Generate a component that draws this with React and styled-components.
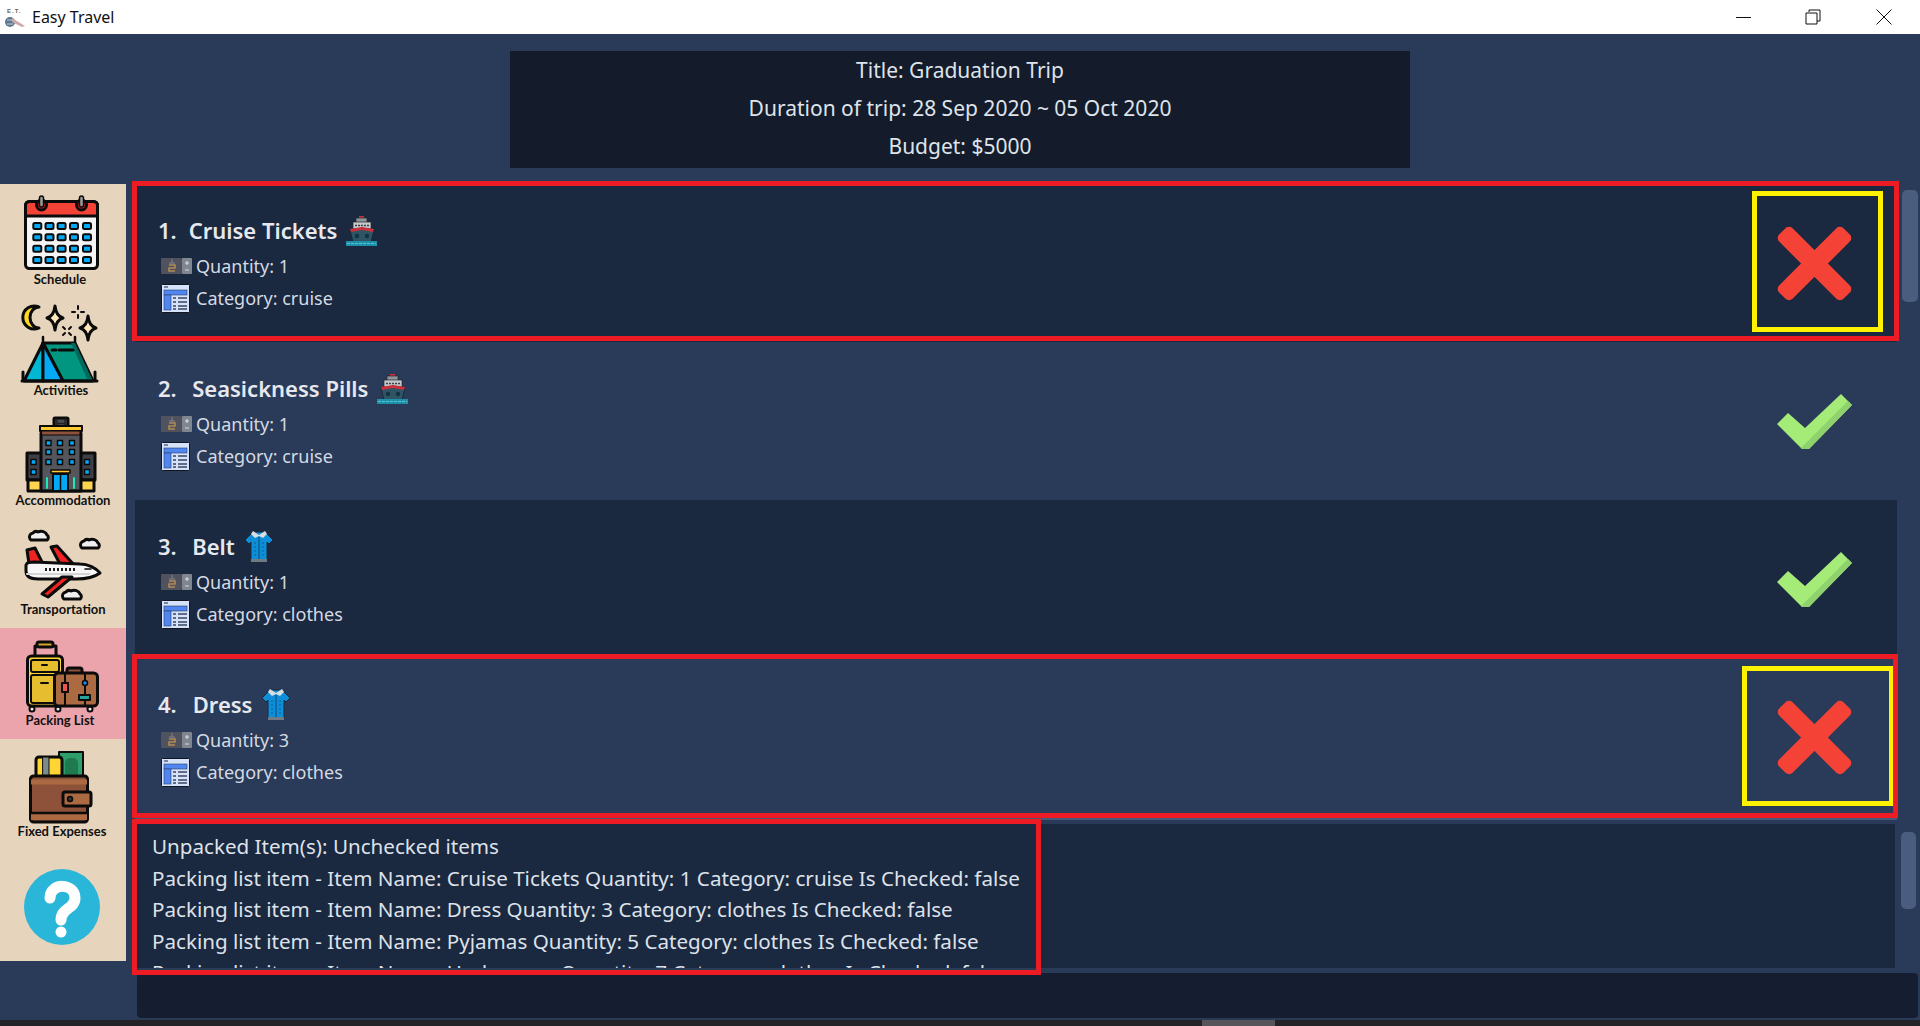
import React from "react";
import styled, { createGlobalStyle } from "styled-components";

const COLORS = {
  page: "#2a3a59",
  dark: "#1a2840",
  darker: "#141b2b",
  command: "#141e30",
  text: "#dfe3ea",
  sand: "#e6d5bc",
  pink: "#eba3ac",
  red: "#ed1c24",
  yellow: "#fff200",
  thumb: "#4a5d7e",
};

const UI_FONT = `"Noto Sans", "Open Sans", sans-serif`;

const GlobalStyle = createGlobalStyle`
  html, body {
    margin: 0;
    padding: 0;
    height: 100%;
    background: ${COLORS.page};
    overflow: hidden;
  }
  * {
    box-sizing: border-box;
  }
`;

const ITEMS = [
  { id: 1, name: "Cruise Tickets", qty: 1, cat: "cruise", ok: false, gap: 3, frame: "-3px -2px 1px -3px", tick: "-35px -31px -31px -25px" },
  { id: 2, name: "Seasickness Pills", qty: 1, cat: "cruise", ok: true, gap: 6.5 },
  { id: 3, name: "Belt", qty: 1, cat: "clothes", ok: true, gap: 6.5 },
  { id: 4, name: "Dress", qty: 3, cat: "clothes", ok: false, gap: 7, frame: "-4px -1px -2px -3px", tick: "-34px -42px -31px -35px" },
];

const LOG = [
  "Unpacked Item(s): Unchecked items",
  "Packing list item - Item Name: Cruise Tickets Quantity: 1 Category: cruise Is Checked: false",
  "Packing list item - Item Name: Dress Quantity: 3 Category: clothes Is Checked: false",
  "Packing list item - Item Name: Pyjamas Quantity: 5 Category: clothes Is Checked: false",
  "Packing list item - Item Name: Underwear Quantity: 7 Category: clothes Is Checked: false",
];

/* ---------- small icons ---------- */

const Logo = () => (
  <svg width="24" height="24" viewBox="0 0 24 24">
    <text x="5" y="8" fontSize="6" fontWeight="700" letterSpacing="1" fill="#666" fontFamily="Liberation Sans, sans-serif">E.T.</text>
    <circle cx="8" cy="17" r="5" fill="#5d7690" />
    <path d="M5 15h6M5 19h6" stroke="#c4ced6" strokeWidth="1" />
    <path d="M10 13l13 8-3 1-10-5z" fill="#c9a9a9" />
  </svg>
);

const ShipIcon = () => (
  <svg width="31" height="31" viewBox="0 0 31 31">
    <rect x="13" y="1" width="5" height="3" fill="#c8303c" />
    <rect x="10" y="3" width="11" height="5" fill="#8f979c" stroke="#20262c" strokeWidth="0.7" />
    <rect x="7" y="7" width="18" height="7" fill="#c5c9c9" stroke="#20262c" strokeWidth="0.7" />
    <path d="M9 10.500h14" stroke="#3c4248" strokeWidth="1.500" strokeDasharray="2 1" />
    <path d="M4 15l12-2 12 2-3 12H7z" fill="#2e5566" stroke="#14242c" strokeWidth="0.8" />
    <path d="M4 14l12-2 12 2-1 3-11-2-11 2z" fill="#c8303c" />
    <circle cx="11" cy="21" r="2.200" fill="#14323f" />
    <circle cx="21" cy="21" r="2.200" fill="#14323f" />
    <rect x="0" y="26" width="31" height="5" fill="#1f8fa8" />
    <path d="M1 28.500h29" stroke="#54c4d8" strokeWidth="1" strokeDasharray="3 1" />
  </svg>
);

const ShirtIcon = () => (
  <svg width="30" height="32" viewBox="0 0 30 32">
    <path d="M9 2L1 10l4 4 2-2v19h16V12l2 2 4-4-8-8z" fill="#0c8fd8" stroke="#1a2a3a" strokeWidth="1" />
    <path d="M9 1l6 4 6-4 2 3-4 4-4-2-4 2-4-4z" fill="#d8dde2" />
    <path d="M15 7v23" stroke="#0a5f96" strokeWidth="1.500" />
    <path d="M11 12v14M19 12v14" stroke="#0a5f96" strokeWidth="1" strokeDasharray="2 2" />
    <rect x="7" y="29" width="16" height="3" fill="#6f7a84" />
  </svg>
);

const QuantityIcon = () => (
  <svg width="31" height="16" viewBox="0 0 31 16">
    <rect x="0" y="0" width="21" height="16" rx="1" fill="#50535d" />
    <rect x="21" y="0" width="10" height="16" rx="1" fill="#7f8690" />
    <path d="M11 1v4M8 5h6" stroke="#82858d" strokeWidth="1" />
    <path d="M8 7h6v3H8v3h6" fill="none" stroke="#b08a55" strokeWidth="1.600" />
    <path d="M24 5h4M26 3v4M24 12h4" stroke="#d6dae0" strokeWidth="1.200" />
  </svg>
);

const CategoryIcon = () => (
  <svg width="29" height="29" viewBox="0 0 29 29">
    <rect x="0.500" y="0.500" width="28" height="28" rx="1" fill="#d5e2fa" stroke="#10151f" />
    <rect x="3" y="6" width="23" height="5" fill="#4f86f0" stroke="#2a3f66" strokeWidth="0.600" />
    <rect x="3" y="11" width="7" height="15" fill="#4f86f0" stroke="#2a3f66" strokeWidth="0.600" />
    <path d="M12 14h3M17 14h9M12 18h3M17 18h9M12 22h3M17 22h9M12 25h3M17 25h9" stroke="#3a4660" strokeWidth="1.600" />
    <path d="M3 3h4" stroke="#3a4660" strokeWidth="1.200" />
  </svg>
);

const CrossIcon = () => (
  <svg width="75" height="75" viewBox="0 0 75 75" style={{ display: "block", overflow: "visible" }}>
    <g fill="#f44336" transform="rotate(45 37.500 37.500)">
      <rect x="-8" y="28" width="91" height="19" rx="5" />
      <rect x="28" y="-8" width="19" height="91" rx="5" />
    </g>
  </svg>
);

const TickIcon = () => (
  <svg width="75" height="55" viewBox="0 0 75 55" style={{ display: "block" }}>
    <path d="M0 30L11 19 28 34 64 0 75 11 32 55H25z" fill="#a5eb78" />
    <path d="M75 11L32 55H25l-1-1 47-47z" fill="#8fd16c" />
  </svg>
);

/* ---------- sidebar drawings, 126 wide, y measured from the item top ---------- */

const StrokeGroup = ({ children, width = 3 }) => (
  <g stroke="#0b0b0b" strokeWidth={width} strokeLinejoin="round" strokeLinecap="round">
    {children}
  </g>
);

const CalendarArt = () => {
  const xs = [37.3, 49.5, 61.6, 74, 87];
  const ys = [42, 53.3, 64.7, 76];
  return (
    <StrokeGroup>
      <rect x="25.500" y="17.500" width="72" height="67" rx="4" fill="#f5f5f5" />
      <path d="M25.500 32V21.500a4 4 0 0 1 4-4h64a4 4 0 0 1 4 4V32z" fill="#f44336" />
      <circle cx="41.500" cy="21" r="5" fill="#b71c1c" />
      <circle cx="81.500" cy="21" r="5" fill="#b71c1c" />
      <rect x="39.500" y="12" width="4" height="11" rx="2" fill="#9e9e9e" strokeWidth="1.500" />
      <rect x="79.500" y="12" width="4" height="11" rx="2" fill="#9e9e9e" strokeWidth="1.500" />
      {ys.map((y) =>
        xs.map((x) => (
          <rect key={`${x}-${y}`} x={x - 4} y={y - 3} width="8" height="6" rx="1.500" fill="#03a9f4" strokeWidth="2" />
        ))
      )}
    </StrokeGroup>
  );
};

const Sparkle = ({ x, y, w, h }) => (
  <path
    d={`M${x} ${y - h}Q${x + 1} ${y - 2} ${x + w} ${y}Q${x + 1} ${y + 2} ${x} ${y + h}Q${x - 1} ${y + 2} ${x - w} ${y}Q${x - 1} ${y - 2} ${x} ${y - h}z`}
    fill="#ffe9b8"
  />
);

const TentArt = () => (
  <StrokeGroup>
    <path d="M39 12a11.500 11.500 0 1 0 0 21a9 10.500 0 0 1 0-21z" fill="#ffd81f" />
    <Sparkle x={55} y={23} w={8} h={12} />
    <Sparkle x={88} y={33} w={8} h={12} />
    <path d="M78 11v3M78 20v3M72 17h3M81 17h3M63 32l2 2M71 32l-2 2M63 40l2-2M71 40l-2-2" strokeWidth="2" />
    <path d="M43 48l32 0 18 38H63z" fill="#00967f" />
    <path d="M75 48l18 38h-5l-17-38z" fill="#00695c" stroke="none" />
    <path d="M43 48L24 86h19z" fill="#00b8d4" />
    <path d="M43 48l20 38H43z" fill="#03a9f4" />
    <path d="M52 55h4M59 55h14M23 77v9M95 77v9M22 86h75" />
    <path d="M43 42v6M75 42v5" strokeWidth="2.500" />
  </StrokeGroup>
);

const HotelArt = () => {
  const windows = [48.5, 60, 72];
  return (
    <StrokeGroup>
      <rect x="54" y="12" width="14" height="12" rx="1" fill="#4d4d54" />
      <path d="M57 14v7M65 14v7M57 17.500h8" strokeWidth="1.500" stroke="#222" />
      <rect x="27" y="47" width="68" height="27" fill="#3f3f46" />
      <rect x="28" y="74" width="66" height="11" fill="#ffd54f" />
      <rect x="41" y="27" width="40" height="58" fill="#55555c" />
      <rect x="40" y="20" width="42" height="5" fill="#ffc933" strokeWidth="2" />
      <rect x="42" y="25" width="38" height="4" fill="#8d5239" strokeWidth="1" />
      {[37, 46, 56].map((y) =>
        windows.map((x) => (
          <rect key={`${x}-${y}`} x={x - 2.5} y={y - 2.5} width="5" height="5" fill="#03a9f4" strokeWidth="1.500" />
        ))
      )}
      {[56, 66].flatMap((y) =>
        [33.5, 87].map((x) => (
          <rect key={`${x}-${y}`} x={x - 2.5} y={y - 2.5} width="5" height="5" fill="#03a9f4" strokeWidth="1.500" />
        ))
      )}
      <rect x="51" y="64" width="19" height="3" fill="#ffc933" strokeWidth="1.500" />
      <rect x="53" y="68" width="15" height="17" fill="#03a9f4" strokeWidth="2" />
      <path d="M60.500 68v17" strokeWidth="1.500" />
      <path d="M47 72v10M74 72v10" stroke="#1de9b6" strokeWidth="2" />
    </StrokeGroup>
  );
};

const Cloud = ({ x, y }) => (
  <path
    d={`M${x + 3} ${y + 10}a4 4 0 0 1 3-6a4 4 0 0 1 5-1a6 5 0 0 1 9 3a3 3 0 0 1 0 5h-16a3 3 0 0 1-1-1z`}
    fill="#efefef"
  />
);

const PlaneArt = () => (
  <StrokeGroup>
    <Cloud x={27} y={12} />
    <Cloud x={78} y={20} />
    <Cloud x={60} y={71} />
    <path d="M27 33l8-2 8 16H29z" fill="#ef2222" />
    <path d="M51 30l6-1 18 20H61z" fill="#ef2222" />
    <path d="M26 48c1-3 4-3 8-3l46 2c8 0 16 4 20 9-4 3-12 6-24 6H38c-8 0-12-3-12-8z" fill="#f7f7f7" />
    <path d="M27 57h62" stroke="#d5d5d5" strokeWidth="2" />
    <path d="M62 60l10 0-24 20-6-3z" fill="#ef2222" />
    <path d="M46 51v3M50 51v3M54 51v3M58 51v3M62 51v3M66 51v3M70 51v3M74 51v3" strokeWidth="1.800" strokeLinecap="butt" />
    <path d="M85 52h6" strokeWidth="1.500" />
  </StrokeGroup>
);

const LuggageArt = () => (
  <StrokeGroup>
    <path d="M35 28V18h21v10" fill="none" />
    <rect x="37" y="14" width="16" height="5" rx="2" fill="#d4a72c" />
    <circle cx="32" cy="81" r="2.500" fill="#eee" strokeWidth="2" />
    <circle cx="58" cy="81" r="2.500" fill="#eee" strokeWidth="2" />
    <circle cx="90" cy="81" r="2.500" fill="#eee" strokeWidth="2" />
    <rect x="27.500" y="28" width="35" height="50" rx="4" fill="#ffd533" />
    <rect x="31" y="32" width="28" height="12" rx="2" fill="#e5bd2e" strokeWidth="2" />
    <rect x="31" y="47" width="28" height="28" rx="2" fill="#e5bd2e" strokeWidth="2" />
    <path d="M41 55h7M42 37h5" strokeWidth="2" />
    <rect x="67" y="40" width="15" height="6" rx="2" fill="#8d5239" />
    <rect x="54.500" y="45" width="43" height="33" rx="4" fill="#ac6a42" />
    <path d="M65 45v33M85 45v33" strokeWidth="2" />
    <rect x="62" y="55" width="6" height="9" fill="#ef5350" strokeWidth="2" />
    <circle cx="85" cy="55" r="2.500" fill="#1e88e5" strokeWidth="1.500" />
    <rect x="79" y="67" width="11" height="5" fill="#26a69a" strokeWidth="2" />
  </StrokeGroup>
);

const WalletArt = () => (
  <StrokeGroup>
    <rect x="59" y="13" width="24" height="28" fill="#2e9e6b" strokeWidth="2" />
    <rect x="65" y="19" width="13" height="20" rx="5" fill="#1f7a50" stroke="none" />
    <path d="M36 38V21a3 3 0 0 1 3-3h20a3 3 0 0 1 3 3v17z" fill="#ffd533" />
    <rect x="43" y="18" width="6" height="20" fill="#7b8a8a" strokeWidth="1" />
    <rect x="30.500" y="37" width="57" height="46" rx="3" fill="#8d5239" />
    <path d="M31 43h56" stroke="#ac6a42" strokeWidth="5" strokeLinecap="butt" />
    <path d="M31 78h56" stroke="#ac6a42" strokeWidth="6" strokeLinecap="butt" />
    <path d="M31 74h56" strokeWidth="2.500" />
    <rect x="63" y="53" width="28" height="14" rx="2" fill="#ac6a42" />
    <circle cx="70" cy="60" r="2.500" fill="#333" strokeWidth="1.500" />
  </StrokeGroup>
);

const HelpArt = () => (
  <>
    <circle cx="62" cy="57" r="38" fill="#29b6d8" />
    <path d="M50 48C50 32 75 33 75 48C75 59 61 58 61 70" fill="none" stroke="#fff" strokeWidth="11" strokeLinecap="round" />
    <circle cx="61" cy="82" r="5.500" fill="#fff" />
  </>
);

const NAV = [
  { label: "Schedule", Art: CalendarArt, shift: -3, drop: 3 },
  { label: "Activities", Art: TentArt, shift: -2, drop: 3 },
  { label: "Accommodation", Art: HotelArt, shift: 0, drop: 2 },
  { label: "Transportation", Art: PlaneArt, shift: 0, drop: 0 },
  { label: "Packing List", Art: LuggageArt, shift: -3, drop: 0, active: true },
  { label: "Fixed Expenses", Art: WalletArt, shift: -1, drop: 0 },
  { Art: HelpArt },
];

const App = () => {
  return (
    <>
      <GlobalStyle />
      <Window>
        <TitleBar>
          <AppName>
            <Logo />
            Easy Travel
          </AppName>
          <WindowButtons>
            <WindowButton aria-label="Minimize">
              <svg width="16" height="16" viewBox="0 0 16 16">
                <path d="M0 8.500h15" stroke="#111" strokeWidth="1" />
              </svg>
            </WindowButton>
            <WindowButton aria-label="Restore">
              <svg width="16" height="16" viewBox="0 0 16 16">
                <path d="M4 3V1h11v11h-3M1 4h11v11H1z" fill="none" stroke="#111" strokeWidth="1" />
              </svg>
            </WindowButton>
            <CloseButton aria-label="Close">
              <svg width="16" height="16" viewBox="0 0 16 16">
                <path d="M0.500 0.500l15 15M15.500 0.500l-15 15" stroke="#111" strokeWidth="1" />
              </svg>
            </CloseButton>
          </WindowButtons>
        </TitleBar>

        <HeaderZone>
          <TripCard>
            <TripLine>Title: Graduation Trip</TripLine>
            <TripLine>Duration of trip: 28 Sep 2020 ~ 05 Oct 2020</TripLine>
            <TripLine>Budget: $5000</TripLine>
          </TripCard>
        </HeaderZone>

        <Main>
          <SideBar>
            {NAV.map(({ label, Art, shift, drop, active }, i) => (
              <NavItem key={i} $active={active}>
                <NavArt viewBox="0 0 126 84">
                  <Art />
                </NavArt>
                {label && (
                  <NavLabel $shift={shift} $drop={drop}>
                    {label}
                  </NavLabel>
                )}
              </NavItem>
            ))}
          </SideBar>

          <Content>
            <ListPane>
              <Rows>
                {ITEMS.map((item, i) => (
                  <Row key={item.id} $dark={i % 2 === 0}>
                    <RowInfo>
                      <RowTitle>
                        <RowNumber $gap={item.gap}>{item.id}.</RowNumber>
                        <span>{item.name}</span>
                        {item.cat === "cruise" ? <ShipIcon /> : <ShirtIcon />}
                      </RowTitle>
                      <Meta>
                        <MetaIcon>
                          <QuantityIcon />
                        </MetaIcon>
                        Quantity: {item.qty}
                      </Meta>
                      <Meta>
                        <MetaIcon>
                          <CategoryIcon />
                        </MetaIcon>
                        Category: {item.cat}
                      </Meta>
                    </RowInfo>
                    <Status>
                      {item.ok ? <TickIcon /> : <CrossIcon />}
                      {item.tick && <TickFrame $inset={item.tick} />}
                    </Status>
                    {item.frame && <RowFrame $inset={item.frame} />}
                  </Row>
                ))}
                <RowsEdge />
              </Rows>
              <ListTrack>
                <Thumb $height={112} />
              </ListTrack>
            </ListPane>

            <ConsoleZone>
              <Console>
                {LOG.map((line) => (
                  <ConsoleLine key={line}>{line}</ConsoleLine>
                ))}
              </Console>
              <ConsoleTrack>
                <Thumb $height={77} />
              </ConsoleTrack>
              <ConsoleFrame />
            </ConsoleZone>

            <CommandBox />
          </Content>
        </Main>

        <BottomBar>
          <BottomThumb />
        </BottomBar>
      </Window>
    </>
  );
};

const Window = styled.div`
  width: 1920px;
  height: 1026px;
  display: flex;
  flex-direction: column;
  background: ${COLORS.page};
  font-family: ${UI_FONT};
  color: ${COLORS.text};
  overflow: hidden;
`;

const TitleBar = styled.header`
  height: 34px;
  flex: none;
  background: #fff;
  display: flex;
  align-items: center;
  justify-content: space-between;
  color: #111;
`;

const AppName = styled.div`
  display: flex;
  align-items: center;
  gap: 6px;
  padding-left: 2px;
  font-size: 16px;
`;

const WindowButtons = styled.div`
  display: flex;
  padding-right: 2px;
`;

const WindowButton = styled.div`
  width: 69px;
  height: 34px;
  display: flex;
  align-items: center;
  justify-content: center;
`;

const CloseButton = styled(WindowButton)`
  margin-left: 2px;
`;

const HeaderZone = styled.div`
  flex: none;
  display: flex;
  justify-content: center;
  padding: 17px 0 16px;
`;

const TripCard = styled.div`
  width: 900px;
  height: 117px;
  background: ${COLORS.darker};
  display: flex;
  flex-direction: column;
  align-items: center;
`;

const TripLine = styled.div`
  height: 38px;
  line-height: 38px;
  font-size: 21px;
`;

const Main = styled.main`
  flex: 1;
  min-height: 0;
  display: flex;
  align-items: flex-start;
`;

const SideBar = styled.nav`
  width: 126px;
  flex: none;
  background: ${COLORS.sand};
`;

const NavItem = styled.div`
  height: 111px;
  background: ${(p) => (p.$active ? COLORS.pink : "transparent")};
`;

const NavArt = styled.svg`
  display: block;
  width: 126px;
  height: 84px;
  overflow: visible;
`;

const NavLabel = styled.div`
  height: 16px;
  line-height: 16px;
  text-align: center;
  font-family: "Lato", sans-serif;
  font-size: 13px;
  font-weight: 700;
  color: #111;
  margin-top: ${(p) => p.$drop}px;
  transform: translateX(${(p) => p.$shift}px);
`;

const Content = styled.div`
  flex: 1;
  min-width: 0;
  padding-left: 9px;
`;

const ListPane = styled.section`
  height: 640px;
  display: flex;
`;

const Rows = styled.div`
  width: 1762px;
  flex: none;
`;

const Row = styled.article`
  position: relative;
  height: 158px;
  display: flex;
  align-items: center;
  justify-content: space-between;
  padding-right: 45px;
  background: ${(p) => (p.$dark ? COLORS.dark : COLORS.page)};
`;

const RowsEdge = styled.div`
  height: 4px;
  background: #45587a;
`;

const RowFrame = styled.div`
  position: absolute;
  inset: ${(p) => p.$inset};
  border: 5px solid ${COLORS.red};
  pointer-events: none;
`;

const RowInfo = styled.div`
  align-self: flex-start;
  padding: 30px 0 0 23px;
`;

const RowTitle = styled.div`
  height: 32px;
  margin-bottom: 4px;
  display: flex;
  align-items: center;
  gap: 9px;
  font-size: 22px;
  font-weight: 600;
  color: #e6e8ee;
`;

const RowNumber = styled.span`
  margin-right: ${(p) => p.$gap}px;
`;

const Meta = styled.div`
  height: 32px;
  display: flex;
  align-items: center;
  margin-left: -1px;
  font-size: 18px;
  color: #d5dae3;
`;

const MetaIcon = styled.span`
  width: 39px;
  padding-left: 4px;
  display: flex;
  align-items: center;
`;

const Status = styled.div`
  position: relative;
  width: 75px;
`;

const TickFrame = styled.div`
  position: absolute;
  inset: ${(p) => p.$inset};
  border: 5px solid ${COLORS.yellow};
  pointer-events: none;
`;

const ListTrack = styled.div`
  flex: 1;
  padding: 6px 2px 0 5px;
`;

const Thumb = styled.div`
  height: ${(p) => p.$height}px;
  border-radius: 5px;
  background: ${COLORS.thumb};
`;

const ConsoleZone = styled.section`
  position: relative;
  height: 144px;
  margin-left: 2px;
  display: flex;
`;

const Console = styled.div`
  flex: 1;
  min-width: 0;
  padding: 7px 15px 0;
  background: ${COLORS.dark};
  overflow: hidden;
`;

const ConsoleLine = styled.div`
  height: 31.5px;
  line-height: 31.5px;
  font-size: 20.6px;
  white-space: nowrap;
  color: #dde2ea;
`;

const ConsoleTrack = styled.div`
  width: 25px;
  flex: none;
  padding: 8px 4px 0 6px;
`;

const ConsoleFrame = styled.div`
  position: absolute;
  left: -5px;
  top: -5px;
  width: 909px;
  height: 156px;
  border: 5px solid ${COLORS.red};
  pointer-events: none;
`;

const CommandBox = styled.div`
  height: 45px;
  margin: 5px 2px 0 2px;
  background: ${COLORS.command};
  border-radius: 4px;
`;

const BottomBar = styled.div`
  height: 6px;
  flex: none;
  background: #232327;
`;

const BottomThumb = styled.div`
  width: 73px;
  height: 6px;
  margin-left: 1202px;
  background: #55555a;
`;

export default App;
